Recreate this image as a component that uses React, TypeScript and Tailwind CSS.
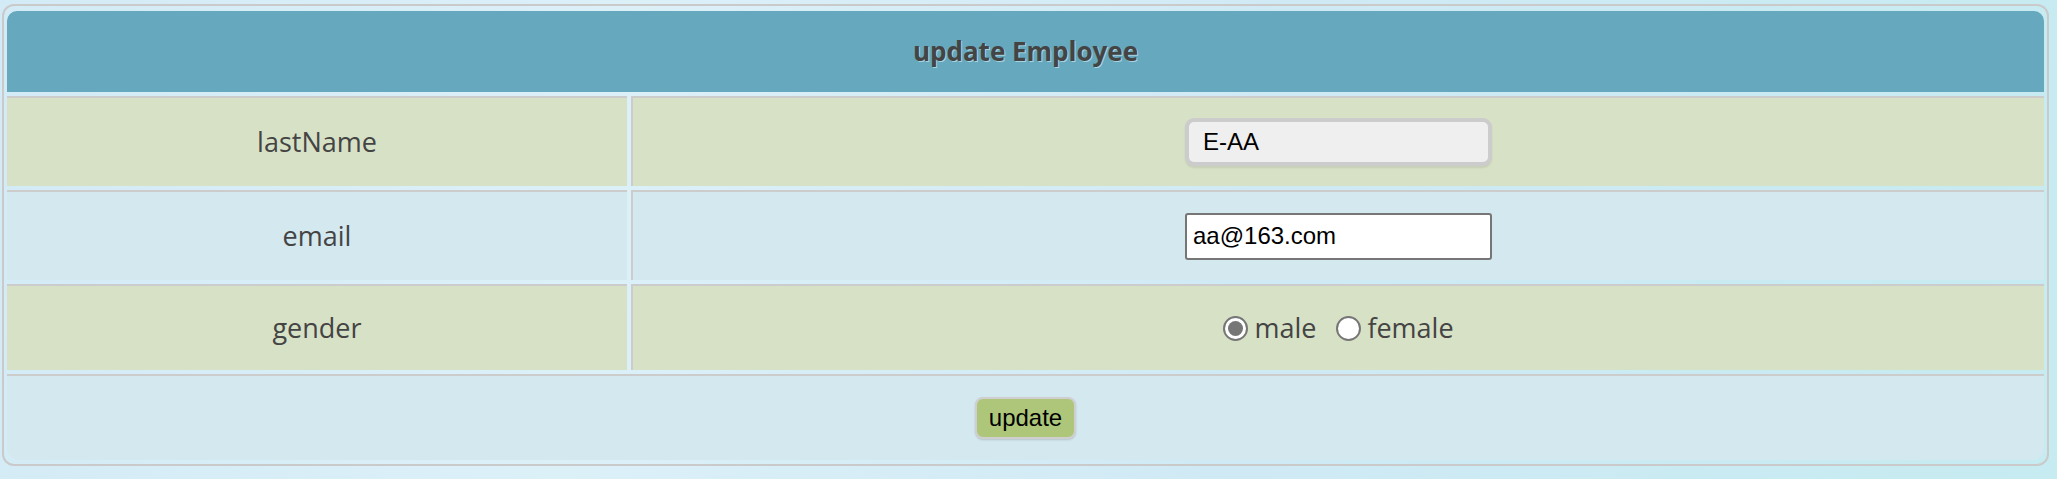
import { useState } from 'react';

const LABEL_FONT = "font-['Open_Sans',sans-serif]";

function Radio({ checked, label, onClick }: { checked: boolean; label: string; onClick: () => void }) {
  return (
    <label onClick={onClick} className="flex items-center cursor-pointer">
      <span className="w-[25px] h-[25px] rounded-full border-2 border-[#767676] bg-white flex items-center justify-center mr-[6px]">
        {checked && <span className="w-[15px] h-[15px] rounded-full bg-[#767676]" />}
      </span>
      <span>{label}</span>
    </label>
  );
}

export default function App() {
  const [gender, setGender] = useState<'male' | 'female'>('male');
  const [email, setEmail] = useState<string>('aa@163.com');

  return (
    <div className="min-h-screen w-full bg-[linear-gradient(100deg,#d3ebf6_0%,#dcf0f8_30%,#d0eaf5_60%,#c6ebf1_100%)] pt-[4px] pl-[2px] pr-[8px]">
      <div className="rounded-[12px] border-2 border-[#cacaca] pl-[3px] pr-[3px] pt-[5px] pb-[4px] flex flex-col gap-[4px]">
        {/* header */}
        <div className="h-[81px] rounded-t-[10px] bg-[#66a8bd] flex items-center justify-center">
          <h1 className={`${LABEL_FONT} text-[26px] font-bold text-[#444] [text-shadow:1px_1px_0_#a9d3e0]`}>
            update Employee
          </h1>
        </div>

        {/* lastName */}
        <div className="grid grid-cols-[620px_1fr] gap-x-[4px] h-[90px]">
          <div className={`${LABEL_FONT} bg-[#d7e1c6] border-t-2 border-[#cccccc] flex items-center justify-center text-[27px] text-[#444]`}>
            lastName
          </div>
          <div className="bg-[#d7e1c6] border-t-2 border-l-2 border-[#cccccc] flex items-center justify-center">
            <input
              readOnly
              value="E-AA"
              className="w-[307px] h-[48px] rounded-[9px] border-[4px] border-[#cccccc] bg-[#efefef] pl-[14px] font-['Liberation_Sans',Arial,sans-serif] text-[24px] text-black outline-none shadow-[0_2px_2px_rgba(0,0,0,0.08)]"
            />
          </div>
        </div>

        {/* email */}
        <div className="grid grid-cols-[620px_1fr] gap-x-[4px] h-[90px]">
          <div className={`${LABEL_FONT} bg-[#d4e8ef] border-t-2 border-[#cccccc] flex items-center justify-center text-[27px] text-[#444]`}>
            email
          </div>
          <div className="bg-[#d4e8ef] border-t-2 border-l-2 border-[#cccccc] flex items-center justify-center">
            <input
              value={email}
              onChange={(e) => setEmail(e.target.value)}
              className="w-[307px] h-[47px] rounded-[3px] border-2 border-[#767676] bg-white px-[6px] font-['Liberation_Sans',Arial,sans-serif] text-[24px] text-black outline-none"
            />
          </div>
        </div>

        {/* gender */}
        <div className="grid grid-cols-[620px_1fr] gap-x-[4px] h-[86px]">
          <div className={`${LABEL_FONT} bg-[#d7e1c6] border-t-2 border-[#cccccc] flex items-center justify-center text-[27px] text-[#444]`}>
            gender
          </div>
          <div className={`${LABEL_FONT} bg-[#d7e1c6] border-t-2 border-l-2 border-[#cccccc] flex items-center justify-center gap-[20px] text-[27px] text-[#444]`}>
            <Radio checked={gender === 'male'} label="male" onClick={() => setGender('male')} />
            <Radio checked={gender === 'female'} label="female" onClick={() => setGender('female')} />
          </div>
        </div>

        {/* submit */}
        <div className="h-[86px] bg-[#d4e8ef] border-t-2 border-[#cccccc] rounded-b-[12px] flex items-center justify-center">
          <button className="w-[101px] h-[42px] rounded-[8px] border-2 border-[#cfcfcf] bg-[#adc679] font-['Liberation_Sans',Arial,sans-serif] text-[24px] text-black shadow-[0_1px_2px_rgba(0,0,0,0.15)]">
            update
          </button>
        </div>
      </div>
    </div>
  );
}
